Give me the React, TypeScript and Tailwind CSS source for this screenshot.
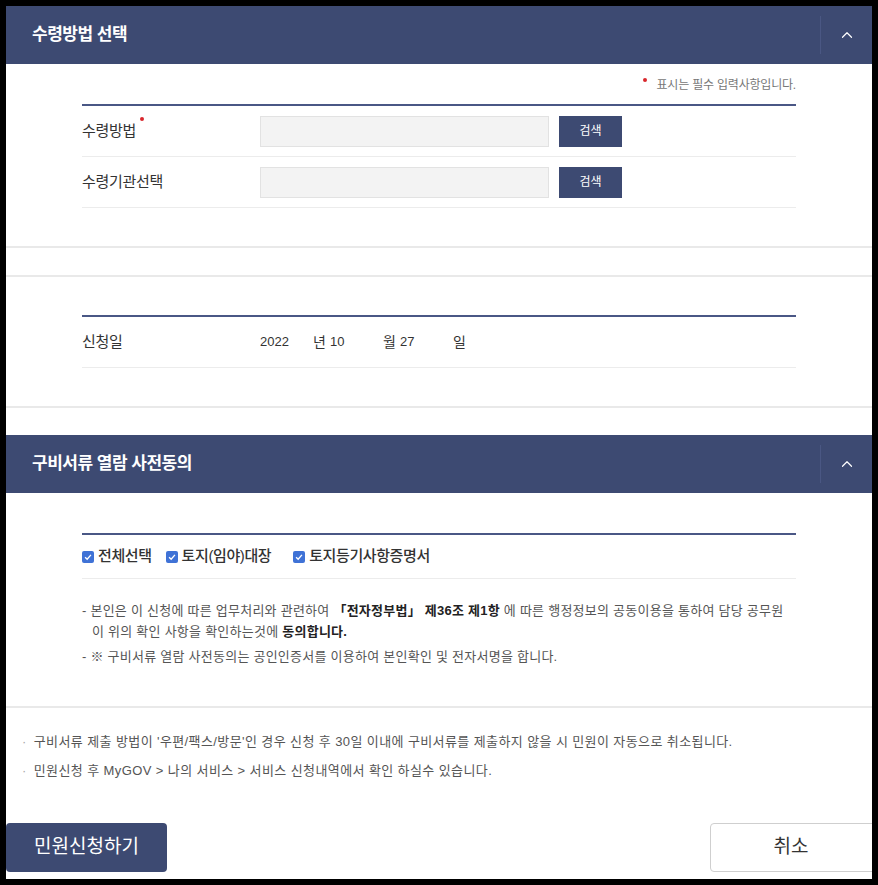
import * as React from "react";
import { ChevronUp } from "lucide-react";

const FONT = { fontFamily: '"Liberation Sans", "Noto Sans CJK KR", sans-serif' };

function SectionHeader({ title }: { title: string }) {
  return (
    <div className="flex h-[58px] items-center bg-[#3d4a72]">
      <div className="flex-1 pl-[26px] text-[17px] font-bold tracking-[-0.5px] text-white">{title}</div>
      <div className="flex h-full w-[52px] items-center">
        <div className="h-[38px] w-px bg-[#4a5783]" />
        <div className="flex flex-1 items-center justify-center">
          <ChevronUp className="h-[18px] w-[18px] text-white" strokeWidth={1.6} />
        </div>
      </div>
    </div>
  );
}

function Check({ label, className }: { label: string; className?: string }) {
  return (
    <label className={"flex items-center gap-[4px] " + (className ?? "")}>
      <span className="flex h-[12px] w-[12px] items-center justify-center rounded-[2px] bg-[#3f72d6]">
        <svg viewBox="0 0 12 12" className="h-[10px] w-[10px]">
          <path d="M2.5 6.2 L5 8.6 L9.5 3.5" fill="none" stroke="white" strokeWidth="1.6" />
        </svg>
      </span>
      <span className="text-[15px] font-medium tracking-[-0.4px] text-[#333]">{label}</span>
    </label>
  );
}

function SearchRow({ label, required }: { label: string; required?: boolean }) {
  return (
    <div className="flex h-[51px] items-center border-b border-[#ececec]">
      <div className="w-[178px] text-[15px] tracking-[-0.3px] text-[#333]">
        <span className="relative">
          {label}
          {required ? <span className="absolute -right-[8px] -top-[5px] h-[4px] w-[4px] rounded-full bg-[#d9262c]" /> : null}
        </span>
      </div>
      <div className="h-[31px] w-[289px] border border-[#e2e2e2] bg-[#f3f3f3]" />
      <button className="ml-[10px] h-[31px] w-[63px] bg-[#3d4a72] text-[12px] text-white">검색</button>
    </div>
  );
}

export default function App() {
  return (
    <div className="h-[885px] w-[878px] bg-black p-[6px]" style={FONT}>
      <div className="flex h-full flex-col overflow-hidden bg-white">
        <SectionHeader title="수령방법 선택" />

        <div className="px-[76px] pt-[13px]">
          <div className="flex h-[16px] items-center justify-end text-[12px] tracking-[-0.2px] text-[#777]">
            <span className="mr-[10px] -mt-[10px] h-[4px] w-[4px] rounded-full bg-[#d9262c]" />
            표시는 필수 입력사항입니다.
          </div>
          <div className="mt-[11px] border-t-2 border-[#4a5785]">
            <SearchRow label="수령방법" required />
            <SearchRow label="수령기관선택" />
          </div>
        </div>

        <div className="mt-[38px] h-[29px] border-t-2 border-[#e9e9e9]" />
        <div className="border-t-2 border-[#e9e9e9] px-[76px] pt-[38px]">
          <div className="border-t-2 border-[#4a5785]">
            <div className="flex h-[51px] items-center border-b border-[#ececec] text-[13px] text-[#333]">
              <div className="w-[178px] text-[15px] tracking-[-0.3px]">신청일</div>
              <span className="w-[53px]">2022</span>
              <span className="w-[17px] text-[14px]">년</span>
              <span className="w-[53px]">10</span>
              <span className="w-[17px] text-[14px]">월</span>
              <span className="w-[53px]">27</span>
              <span className="text-[14px]">일</span>
            </div>
          </div>
        </div>
        <div className="mt-[38px] border-t-2 border-[#e9e9e9]" />

        <div className="mt-[27px]">
          <SectionHeader title="구비서류 열람 사전동의" />
        </div>

        <div className="px-[76px] pt-[40px]">
          <div className="border-t-2 border-[#4a5785]">
            <div className="flex h-[44px] items-center border-b border-[#ececec]">
              <Check label="전체선택" />
              <Check label="토지(임야)대장" className="ml-[14px]" />
              <Check label="토지등기사항증명서" className="ml-[22px]" />
            </div>
          </div>
          <div className="pt-[21px] text-[13px] leading-[21px] tracking-[0.25px] text-[#555]">
            <p className="whitespace-nowrap">
              - 본인은 이 신청에 따른 업무처리와 관련하여 <b className="text-[#222]">「전자정부법」 제36조 제1항</b> 에 따른 행정정보의 공동이용을 통하여 담당 공무원
            </p>
            <p className="pl-[10px]">
              이 위의 확인 사항을 확인하는것에 <b className="text-[#222]">동의합니다.</b>
            </p>
            <p className="mt-[4px]">- ※ 구비서류 열람 사전동의는 공인인증서를 이용하여 본인확인 및 전자서명을 합니다.</p>
          </div>
        </div>

        <div className="mt-[39px] border-t-2 border-[#e9e9e9]" />

        <div className="px-[16px] pt-[24px] text-[13px] tracking-[0.4px] text-[#555]">
          <p className="flex h-[20px] items-center whitespace-nowrap">
            <span className="mr-[7px] text-[#aaa]">·</span>
            구비서류 제출 방법이 '우편/팩스/방문'인 경우 신청 후 30일 이내에 구비서류를 제출하지 않을 시 민원이 자동으로 취소됩니다.
          </p>
          <p className="mt-[9px] flex h-[20px] items-center whitespace-nowrap">
            <span className="mr-[7px] text-[#aaa]">·</span>
            민원신청 후 MyGOV &gt; 나의 서비스 &gt; 서비스 신청내역에서 확인 하실수 있습니다.
          </p>
        </div>

        <div className="mt-auto mb-[7px] flex items-end justify-between">
          <button className="h-[49px] w-[161px] rounded-[4px] bg-[#3d4a72] text-[19px] text-white">민원신청하기</button>
          <button className="-mr-[8px] h-[49px] w-[170px] rounded-[4px] border border-[#cfcfcf] bg-white pr-[8px] text-[19px] text-[#333]">취소</button>
        </div>
      </div>
    </div>
  );
}
